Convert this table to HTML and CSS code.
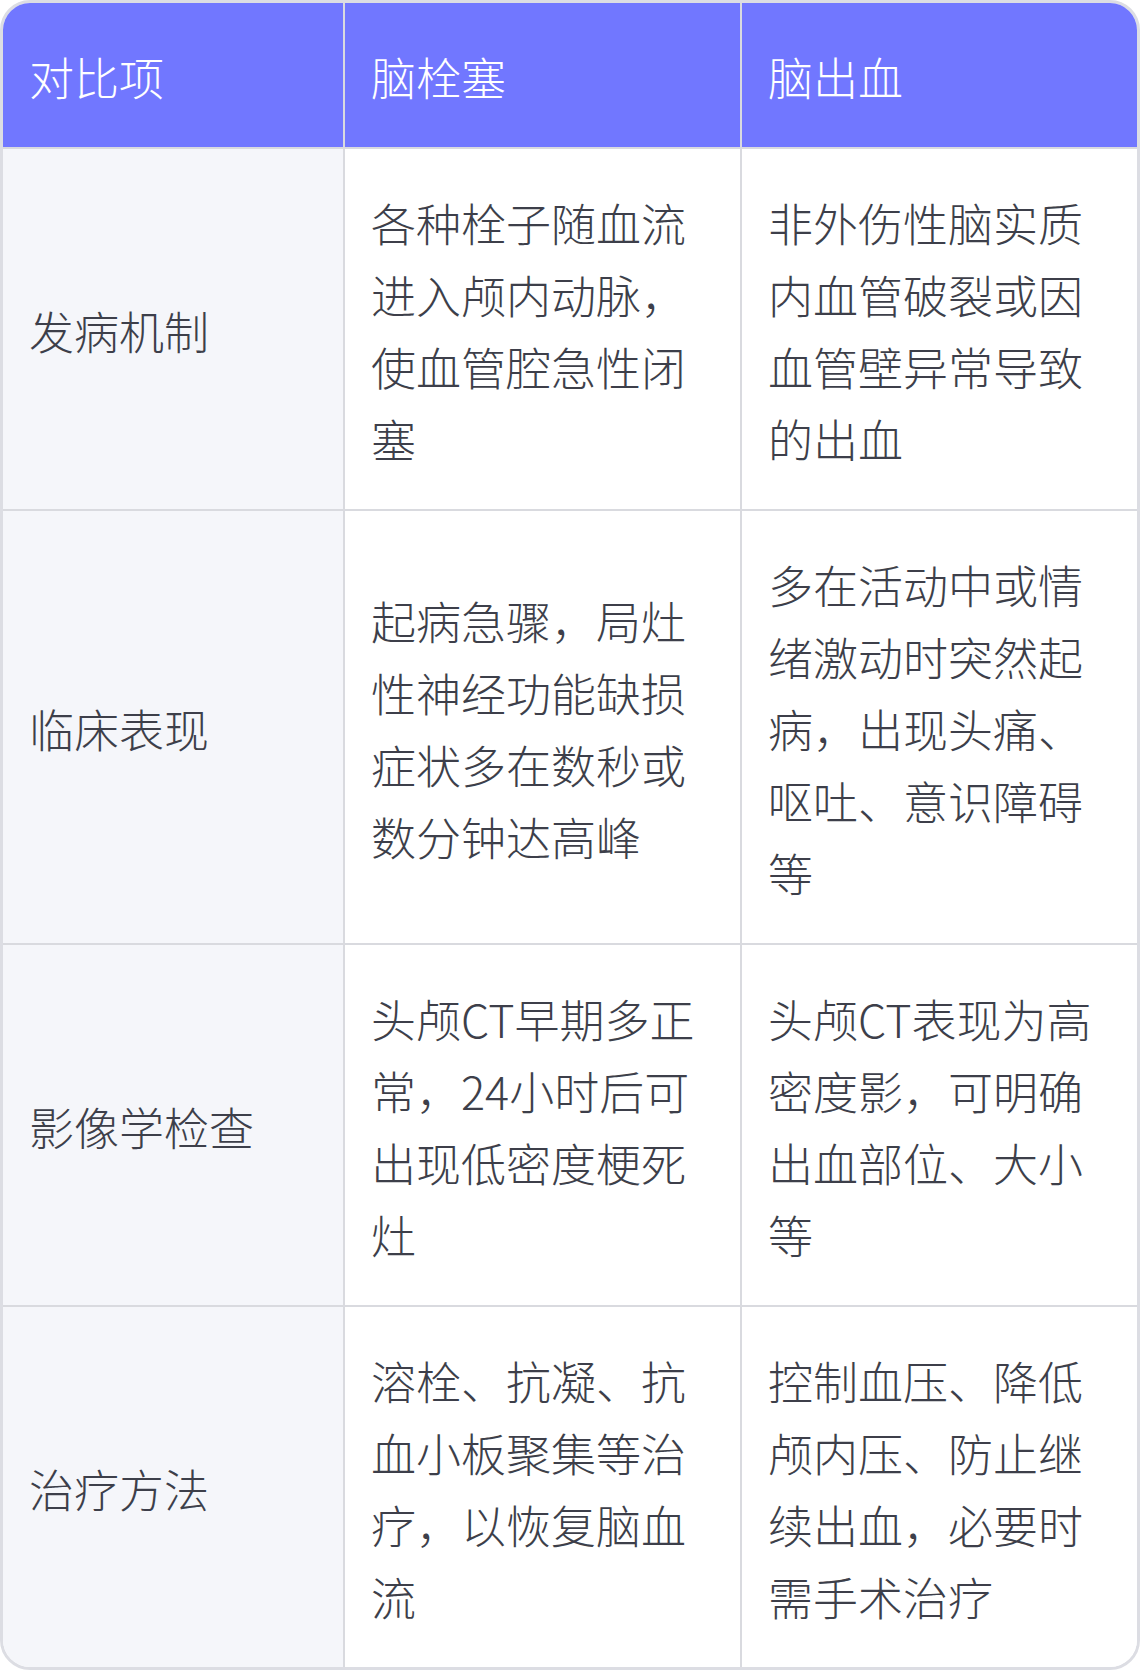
FILE: index.html
```html
<!DOCTYPE html>
<html lang="zh-CN">
<head>
<meta charset="utf-8">
<title>脑栓塞与脑出血对比</title>
<link rel="stylesheet" href="styles.css">
</head>
<body>
<div class="card">
  <table class="compare">
    <colgroup>
      <col class="c1">
      <col class="c2">
      <col class="c3">
    </colgroup>
    <thead>
      <tr>
        <th>对比项</th>
        <th>脑栓塞</th>
        <th>脑出血</th>
      </tr>
    </thead>
    <tbody>
      <tr>
        <td class="label">发病机制</td>
        <td>各种栓子随血流进入颅内动脉，使血管腔急性闭塞</td>
        <td>非外伤性脑实质内血管破裂或因血管壁异常导致的出血</td>
      </tr>
      <tr>
        <td class="label">临床表现</td>
        <td>起病急骤，局灶性神经功能缺损症状多在数秒或数分钟达高峰</td>
        <td>多在活动中或情绪激动时突然起病，出现头痛、呕吐、意识障碍等</td>
      </tr>
      <tr>
        <td class="label">影像学检查</td>
        <td>头颅CT早期多正常，24小时后可出现低密度梗死灶</td>
        <td>头颅CT表现为高密度影，可明确出血部位、大小等</td>
      </tr>
      <tr>
        <td class="label">治疗方法</td>
        <td>溶栓、抗凝、抗血小板聚集等治疗，以恢复脑血流</td>
        <td>控制血压、降低颅内压、防止继续出血，必要时需手术治疗</td>
      </tr>
    </tbody>
  </table>
</div>
</body>
</html>
```
FILE: styles.css
```css
html, body {
  margin: 0;
  padding: 0;
  background: #ffffff;
}

.card {
  width: 1140px;
  box-sizing: border-box;
  border: 3px solid #dcdde3;
  border-radius: 30px;
  overflow: hidden;
  background: #ffffff;
}

.compare {
  width: 100%;
  border-collapse: collapse;
  table-layout: fixed;
  font-family: "Noto Sans CJK SC", "Noto Sans", sans-serif;
  font-weight: 300;
  font-size: 45px;
  line-height: 72px;
  color: #3d3f4a;
}

.c1 { width: 341px; }
.c2 { width: 397px; }
.c3 { width: 396px; }

.compare th,
.compare td {
  padding: 38px 26px 34px;
  text-align: left;
  vertical-align: middle;
  border: 2px solid #d9dadf;
}

.compare tr > :first-child { border-left: 0; }
.compare tr > :last-child { border-right: 0; }
.compare thead th { border-top: 0; }
.compare tbody tr:last-child td { border-bottom: 0; }

.compare th {
  background: #7177ff;
  color: #ffffff;
  font-weight: 300;
}

.compare td {
  background: #ffffff;
}

.compare td.label {
  background: #f5f6fa;
}
```
